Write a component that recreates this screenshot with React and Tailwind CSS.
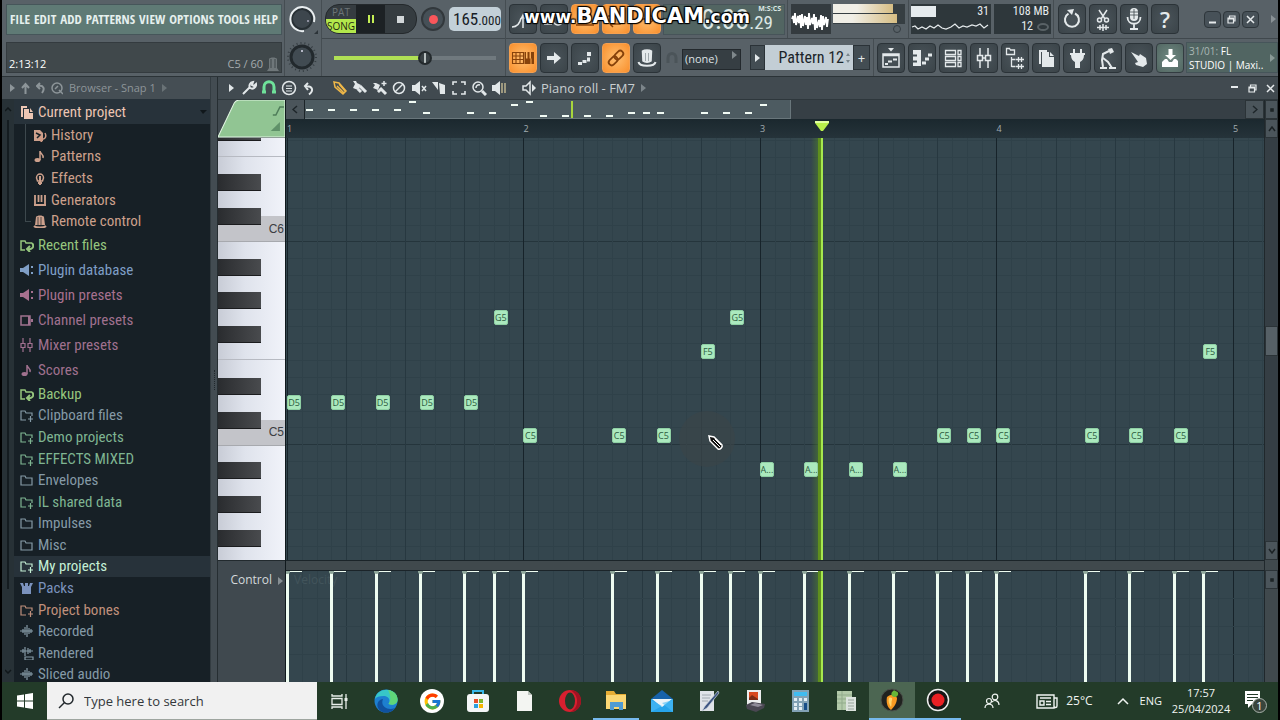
import { FcGoogle } from "react-icons/fc";

const STEP = 14.78;
const GRID_W = 978;
const GRID_H = 421;
const ROW = 16.87;

const ROWS = { G5: 10, F5: 12, D5: 15, C5: 17, "A...": 19 };

const NOTES = [
	[0, "D5"],
	[3, "D5"],
	[6, "D5"],
	[9, "D5"],
	[12, "D5"],
	[14, "G5"],
	[16, "C5"],
	[22, "C5"],
	[25, "C5"],
	[28, "F5"],
	[30, "G5"],
	[32, "A..."],
	[35, "A..."],
	[38, "A..."],
	[41, "A..."],
	[44, "C5"],
	[46, "C5"],
	[48, "C5"],
	[54, "C5"],
	[57, "C5"],
	[60, "C5"],
	[62, "F5"],
];

const stepLeft = (step, shift = 1) => `${((step * STEP + shift) / GRID_W) * 100}%`;
const rowTop = (row) => `${((row * ROW + 3) / GRID_H) * 100}%`;

/* ---------- icons ---------- */

const Glyph = ({ w = 28, h = 30, className = "", children }) => (
	<svg
		width={w}
		height={h}
		viewBox={`0 0 ${w} ${h}`}
		className={`shrink-0 ${className}`}
		fill="none"
		stroke="currentColor"
		strokeWidth="1.5"
		aria-hidden="true"
	>
		{children}
	</svg>
);

const Arrow = ({ className = "" }) => (
	<Glyph w={5} h={8} className={className}>
		<path d="M0 0 5 4 0 8z" fill="currentColor" stroke="none" />
	</Glyph>
);

const toolIcons = {
	wait: <path d="M3 23c5 0 8-4 9-9M14 11v13M12 15l2-4 2 4M17 15h6" />,
	countdown: (
		<>
			<circle cx="18" cy="16" r="5" />
			<path d="M4 20h8M6 16h5" />
		</>
	),
	blend: <path d="M5 21h18M8 17h12M11 13h6" />,
	loop: <path d="M6 12h12v8H8M18 12l-3-3M8 20l3 3" />,
	scroll: <path d="M5 15h16M16 10l5 5-5 5" />,
	typing: (
		<>
			<path d="M3.5 9.5h11v11h-11zM3.5 13h11M3.5 16.5h11M7 9v11M11 9v11" strokeWidth="1.1" />
			<path
				d="M15.5 9H17v6.5h1V21h-2.5zM18.5 9h2v6.500h1V21H18v-5.500h.5zM22 9h3v12h-2.500v-5.500H22z"
				fill="currentColor"
				stroke="none"
			/>
		</>
	),
	forward: <path d="M7 13h7V9l7 6-7 6v-4H7z" fill="currentColor" stroke="none" />,
	step: (
		<>
			<path d="M7 20.5h4M11.5 18.5h4" strokeWidth="3" />
			<path d="M17.5 18.500v-4" strokeWidth="3" />
			<path d="M16 9h4v4h-4z" fill="currentColor" stroke="none" />
		</>
	),
	link: (
		<g transform="rotate(-45 14 15)" strokeWidth="1.8">
			<rect x="5" y="12" width="10" height="6" rx="3" />
			<rect x="13" y="12" width="10" height="6" rx="3" />
		</g>
	),
	hat: (
		<>
			<path d="M9.5 8c2-1.5 7-1.5 9 0l-.5 10c-2 1.5-6 1.5-8 0z" fill="currentColor" />
			<path d="M5.5 19c1 5 16 5 17 0" strokeWidth="2" />
			<path d="M12.5 10v8M15.5 10v8" stroke="#59646a" strokeWidth=".5" />
		</>
	),
	playlist: (
		<>
			<path d="M11 5h6l-3 3.5z" fill="currentColor" stroke="none" />
			<path d="M6 11h16v13H6zM6 12.5h16" />
			<path d="M8 21h3M11 18.5h4M16 16.5h4" strokeWidth="2" />
		</>
	),
	pianoroll: (
		<>
			<path d="M5 7h8v16H5v-3.5h4v-2H5v-4h4v-2H5z" fill="currentColor" stroke="none" />
			<path d="M14 20h4M17 16h4M20 12h4" strokeWidth="3" />
		</>
	),
	rack: (
		<path
			d="M6.5 7.5h10v4h-10zM6.5 13.5h10v4h-10zM6.5 19.5h10v4h-10zM19 7.5h3v4h-3zM19 13.5h3v4h-3zM19 19.5h3v4h-3z"
			strokeWidth="1.3"
		/>
	),
	mixer: <path d="M10 5v7M10 18v7M18 5v7M18 18v7M7.5 12.5h5v5h-5zM15.5 12.5h5v5h-5zM12 15h4" />,
	browser: (
		<>
			<path d="M5.5 11.5v-6h3l1 1.5h4v4.500zM10.500 14v10M10.500 16.500h4M10.500 23.500h4M15 16.500h8M15 23.500h8" strokeWidth="1.3" />
			<path d="M17.5 14v5M20.5 14v5M17.5 21v5M20.5 21v5" strokeWidth="1.3" />
		</>
	),
	docs: (
		<>
			<path d="M7 7h8v2H9v12H7z" fill="currentColor" stroke="none" />
			<path d="M10 9h7v5h5v10H10zM18 9l4 4h-4z" fill="currentColor" stroke="none" />
		</>
	),
	plug: (
		<path
			d="M7 10h3V6h2v4h5V6h2v4h3v2h-1c0 4-2 6-4 7v6h-5v-6c-2-1-4-3-4-7H7z"
			fill="currentColor"
			stroke="none"
		/>
	),
	tempo: (
		<>
			<path d="M14 6l4-1 2 4-4 2z" fill="currentColor" stroke="none" />
			<path d="M15 8l-6 3-1 6 1 7M9 15l5 4 4 6M6 25h7M15 25h7" strokeWidth="2" />
		</>
	),
	hand: (
		<path
			d="M6 9l8 4 1-2 6 4 1 6-4 3-7-2-1-2 3-1-2-3z"
			fill="currentColor"
			stroke="none"
		/>
	),
	save: (
		<>
			<path d="M12.5 6h4v6H20l-5.5 5L9 12h3.500z" fill="currentColor" stroke="none" />
			<path d="M7 18l2-2h2l2 3h3l2-3h2l2 2v6H6v-5z" fill="currentColor" stroke="none" />
		</>
	),
	undo: (
		<>
			<path d="M17 9.5a7 7 0 1 1-6.5.2" strokeWidth="2" />
			<path d="M9 6l7-1-2 6z" fill="currentColor" stroke="none" />
		</>
	),
	cut: (
		<>
			<path d="M10 6l6 9M18 6l-6 9M8 23.5h12M11 21v5M14 20v7M17 21v5" />
			<circle cx="10.5" cy="16" r="2" />
			<circle cx="17.5" cy="16" r="2" />
		</>
	),
	mic: (
		<>
			<rect x="10" y="4" width="8" height="13" rx="4" fill="currentColor" stroke="none" />
			<path d="M7.5 13c0 9 13 9 13 0M14 20v4M10 25h8" strokeWidth="1.8" />
			<path d="M10 8h8M10 11h8M14 5v10" stroke="#3d464c" strokeWidth=".8" />
		</>
	),
};

const ToolButton = ({ name, label, lit, pale }) => (
	<button
		aria-label={label}
		className={
			lit
				? "w-7 h-[30px] rounded-sm border border-[#f5a050] bg-[radial-gradient(#ffc071,#f98f2c)] text-[#86420b]"
				: pale
					? "w-7 h-[30px] rounded-sm border border-[#333c41] bg-[radial-gradient(#708982,#526762)] text-white"
					: "w-7 h-[30px] rounded-sm border border-[#2b3338] bg-[radial-gradient(#4a545a,#3b4449)] text-[#e4e9eb]"
		}
	>
		<Glyph className="-m-px">{toolIcons[name]}</Glyph>
	</button>
);

const treeIcons = {
	docs: (
		<>
			<path d="M1 1h6v2H3v9H1z" fill="currentColor" stroke="none" />
			<path d="M4 4h5v4h4v6H4zM10 3l3 4h-3z" fill="currentColor" stroke="none" />
		</>
	),
	history: (
		<>
			<path d="M1 2h6l3 3v8H1z" fill="currentColor" stroke="none" />
			<path d="M12 5c2 4 0 7-5 6M9 8l-3 3 3 3" stroke="#d29a83" />
			<path d="M3 5l4 2-3 3" stroke="#172026" />
		</>
	),
	note: (
		<>
			<ellipse cx="4.5" cy="11" rx="3" ry="2" fill="currentColor" stroke="none" />
			<path d="M7 11V2c0 3 4 3 3 7" />
		</>
	),
	effect: (
		<>
			<path d="M3.5 7a3.5 4 0 1 1 7 0l-1 3h-5z" />
			<path d="M7 5v9M5 12h4" strokeWidth="2" />
		</>
	),
	keys: (
		<>
			<path d="M2 2v10h10V2" strokeWidth="1.8" />
			<path d="M1 12h12M5.5 2v7M8.5 2v7" strokeWidth="1.8" />
		</>
	),
	knob: (
		<>
			<path d="M3 3c1-2 7-2 8 0l1 8H2z" fill="currentColor" stroke="none" />
			<path d="M1 12c2 2 10 2 12 0" strokeWidth="2" />
			<path d="M5 3v8M8 3v8" stroke="#172026" strokeWidth=".7" />
		</>
	),
	recent: (
		<>
			<path d="M5 12H1V3h4l1 2h6" />
			<path d="M12 5c3 4 0 7-5 6M10 8l-3 3 3 3" strokeWidth="2" />
		</>
	),
	speaker: (
		<>
			<path d="M0 5h3l6-4v12L3 9H0z" fill="currentColor" stroke="none" />
			<path d="M11 4h2M11 10h2" strokeWidth="2" />
		</>
	),
	channel: (
		<>
			<path d="M1 3h9v9H1z" />
			<path d="M9 3v9M12 6v3" strokeWidth="2" />
		</>
	),
	faders: <path d="M3 0v5M3 10v4M10 0v5M10 10v4M1 5.5h4v4H1zM8 5.5h4v4H8z" strokeWidth="1.2" />,
	folder: <path d="M1 12V3h4l1 2h6v7z" strokeWidth="1.2" />,
	folderPlus: <path d="M6 12H1V3h4l1 2h6v3M8 11h5M10.5 8v6" strokeWidth="1.2" />,
	packs: <path d="M0 2h3l1 3h1V2h3v3h1l1-3h3l-2 4v7H2V6z" fill="currentColor" stroke="none" />,
	wave: <path d="M0 7h13M3 5v4M5 3v8M7 1v12M9 4v6M11 5v4" strokeWidth="1.2" />,
	render: <path d="M0 5h13M3 3v4M5 1v9M8 2v6M10 3v4M5 11h8v3H5z" strokeWidth="1.2" />,
};

/* ---------- top bar ---------- */

const MENU = ["FILE", "EDIT", "ADD", "PATTERNS", "VIEW", "OPTIONS", "TOOLS", "HELP"];

const Knob = ({ label, ring }) => (
	<button aria-label={label} className="h-[38px] w-full flex items-center justify-center">
		<Glyph w={32} h={32}>
			{ring ? (
				<>
					<circle cx="15" cy="16" r="10" fill="#3d464d" stroke="#272f34" strokeWidth="2" />
					<path d="M17 28A12 12 0 1 1 27 19" stroke="#e9eef0" strokeWidth="2" />
					<circle cx="21" cy="18" r="1" fill="#aab" stroke="none" />
					<path d="M31 27v4h-4z" fill="#2c3439" stroke="none" />
				</>
			) : (
				<>
					<circle cx="15" cy="16" r="14" stroke="#353d42" strokeWidth="2" strokeDasharray="1 3" />
					<circle cx="15" cy="16" r="11" fill="#414b52" stroke="#22292d" strokeWidth="3" />
					<circle cx="15" cy="10" r="1" fill="#dde" stroke="none" />
				</>
			)}
		</Glyph>
	</button>
);

const Transport = () => (
	<div className="w-[184px] shrink-0 border-l border-[#454d52] flex flex-col">
		<div className="h-[39px] flex items-center gap-1 pl-[3px] border-b border-[#40484d]">
			<div className="flex h-[30px] w-[92px] rounded-[14px] overflow-hidden border border-[#24292c] bg-[#353c40]">
				<div className="w-[30px] flex flex-col text-[10px] leading-[14px] font-['Open_Sans',sans-serif]">
					<button className="flex-1 text-[#6c7478]">PAT</button>
					<button className="flex-1 bg-[#b3e84c] text-[#1f2a10]">SONG</button>
				</div>
				<button aria-label="Pause" className="w-[29px] bg-[#1c2124] flex items-center justify-center">
					<Glyph w={8} h={8} className="text-[#c4ee55]">
						<path d="M2 0v8M6 0v8" strokeWidth="2" />
					</Glyph>
				</button>
				<button aria-label="Stop" className="flex-1 flex items-center justify-center">
					<span className="size-[7px] bg-[#d2d7d9]" />
				</button>
			</div>
			<button
				aria-label="Record"
				className="size-6 rounded-full border-2 border-[#32383c] bg-[#465057] flex items-center justify-center"
			>
				<span className="size-[9px] rounded-full bg-[#f9565b]" />
			</button>
			<button
				aria-label="Tempo"
				className="h-6 w-[52px] rounded-[5px] bg-[#c3d0d8] text-[#182026] flex items-baseline justify-start pl-1 font-['Liberation_Sans_Narrow','Roboto_Condensed','Open_Sans_Condensed',sans-serif]"
			>
				<span className="text-[17px] leading-6">165</span>
				<span className="text-[13px] leading-6">.000</span>
			</button>
		</div>
		<div className="h-[37px] flex items-center pl-3">
			<input
				type="range"
				aria-label="Main volume"
				defaultValue="57"
				className="w-[162px] h-4 appearance-none bg-[linear-gradient(to_right,#b0e055_56%,#70797e_56%)] bg-[length:100%_4px] bg-no-repeat bg-center [&::-webkit-slider-thumb]:appearance-none [&::-webkit-slider-thumb]:size-[14px] [&::-webkit-slider-thumb]:rounded-full [&::-webkit-slider-thumb]:border-2 [&::-webkit-slider-thumb]:border-[#23292c] [&::-webkit-slider-thumb]:bg-[linear-gradient(to_right,#394145_40%,#b8c0c0_40%,#b8c0c0_60%,#394145_60%)]"
			/>
		</div>
	</div>
);

const WindowButtons = ({ boxed }) => {
	const cls = boxed
		? "size-[17px] rounded-sm border border-[#2e363b] bg-[#475158] flex items-center justify-center"
		: "size-[16px] flex items-center justify-center";
	return (
		<div className="flex gap-[2px] text-[#e6eaec]">
			<button aria-label="Minimize" className={cls}>
				<Glyph w={9} h={9}>
					<path d={boxed ? "M1 7.5h7" : "M1 3h7"} strokeWidth="2" />
				</Glyph>
			</button>
			<button aria-label="Restore" className={cls}>
				<Glyph w={9} h={9}>
					<path d="M2.5 2.5V1H8v5H6.5M1 3h5.5v5H1zM1 4h5" strokeWidth="1.2" />
				</Glyph>
			</button>
			<button aria-label="Close" className={cls}>
				<Glyph w={9} h={9}>
					<path d="M1 1l7 7M8 1L1 8" />
				</Glyph>
			</button>
		</div>
	);
};

const TopBar = () => {
	return (
		<header className="relative shrink-0 flex h-[77px] bg-[#586167] border-b border-[#2b3337]">
			<div className="w-[282px] shrink-0 flex flex-col pl-1 pr-[2px]">
				<nav className="mt-1 h-[31px] flex items-center justify-between px-[3px] bg-[#5f7a75] border border-[#46565a] text-[#e6f0ee] text-[13px] font-['Open_Sans_Condensed','Liberation_Sans_Narrow',sans-serif]">
					{MENU.map((item) => (
						<button key={item}>{item}</button>
					))}
				</nav>
				<div className="mt-[7px] h-[31px] flex items-end gap-1 px-[2px] bg-[#40484b] border border-[#343b3f] text-[11px] leading-4 text-white font-['Open_Sans',sans-serif]">
					<span className="flex-1">2:13:12</span>
					<span className="text-[#a5abad]">C5 / 60</span>
					<Glyph w={12} h={16} className="text-[#6f777a]">
						<path d="M2 3c1-2 7-2 8 0v9l2 3H0l2-3z" fill="currentColor" stroke="none" />
						<path d="M4 3v9M8 3v9" stroke="#40484b" strokeWidth="1" />
					</Glyph>
				</div>
			</div>
			<div className="w-[37px] shrink-0 border-l border-[#454d52]">
				<Knob ring label="Main volume knob" />
				<Knob label="Main pitch knob" />
			</div>
			<Transport />
			<div className="flex-1 min-w-0 flex flex-col border-l border-[#454d52]">
				<div className="h-[39px] flex items-center pl-[3px] border-b border-[#40484d]">
					<div className="flex gap-[3px]">
						<ToolButton name="wait" label="Metronome" />
						<ToolButton name="countdown" label="Countdown" />
						<ToolButton name="blend" label="Blend notes" lit />
						<ToolButton name="loop" label="Loop record" lit />
						<ToolButton name="scroll" label="Auto scroll" lit />
					</div>
					<div className="ml-[2px] w-[122px] h-[31px] flex items-start justify-end bg-[#526562] border border-[#475459] text-[#dce7e5] font-['Liberation_Sans_Narrow','Roboto_Condensed','Open_Sans_Condensed',sans-serif]">
						<span className="text-[28px] leading-[29px]">0:03</span>
						<span className="flex flex-col items-end pr-[3px]">
							<span className="text-[7px] leading-[8px] font-bold font-['Open_Sans',sans-serif]">M:S:CS</span>
							<span className="text-[19px] leading-[20px] pr-2">.29</span>
						</span>
					</div>
					<div className="ml-[2px] pl-[3px] h-full flex items-center gap-[2px] border-l border-[#454d52]">
						<div className="w-10 h-[30px] bg-[#343b3f]">
							<Glyph w={40} h={30} className="text-white">
								<path
									d="M1 15l1-3 1 7 1-10 1 12 2-9 1 7 1-8 1 13 1-14 1 12 2-10 1 9 1-8 1 12 1-16 1 12 2-7 1 6 1-10 1 16 1-13 1 11 2-8 1 7 1-12 1 15 1-14 1 9 2-8 1 10 1-8"
									strokeWidth="1.8"
								/>
							</Glyph>
						</div>
						<div className="w-[72px] h-[30px] flex flex-col">
							<div className="h-5 bg-[#363e42] flex flex-col gap-px">
								<div className="h-[9px] w-[60px] bg-[linear-gradient(to_right,#f0eee6_40%,#d6bd83)]" />
								<div className="h-[9px] w-[64px] bg-[linear-gradient(to_right,#f0eee6_30%,#d6bd83)]" />
							</div>
							<span className="self-end mr-1 mt-px size-2 rounded-full border border-[#353d42]" />
						</div>
					</div>
					<div className="ml-[3px] pl-[2px] h-full flex items-center gap-[3px] border-l border-[#454d52] text-[#e6ebed] text-[12px] leading-[15px] font-['Liberation_Sans_Narrow','Roboto_Condensed','Open_Sans_Condensed',sans-serif]">
						<div className="w-20 h-[30px] bg-[#2e373b]">
							<div className="h-[15px] flex justify-between pr-[2px]">
								<span className="mt-[2px] h-[11px] w-[25px] bg-[#e5ebee]" />
								31
							</div>
							<Glyph w={80} h={15}>
								<path
									d="M1 8l3-1 3 3 4-2 4 2 4-3 4 2 4-3 4 3 4 1 5-2 4-3 4 4 4-2 4 1 5-2 4 1 4-2 4 4 4-3"
									strokeWidth="1.2"
								/>
							</Glyph>
						</div>
						<div className="w-[57px] h-[30px] bg-[#2e373b] pr-[2px] text-right">
							<div>108 MB</div>
							<div className="flex items-center justify-end gap-1">
								12
								<span className="h-2 w-3 rounded-[50%] border-2 border-[#596266]" />
							</div>
						</div>
					</div>
					<div className="ml-[2px] pl-1 h-full flex items-center gap-[3px] border-l border-[#454d52]">
						<ToolButton name="undo" label="Undo" />
						<ToolButton name="cut" label="Edit audio" />
						<ToolButton name="mic" label="Record audio" />
						<button
							aria-label="Help"
							className="w-7 h-[30px] rounded-sm border border-[#2b3338] bg-[radial-gradient(#4a545a,#3b4449)] text-[#e4e9eb] text-[22px] leading-7 font-semibold font-['Open_Sans',sans-serif]"
						>
							?
						</button>
					</div>
					<div className="ml-auto flex items-center gap-3 pr-[2px]">
						<WindowButtons boxed />
						<Arrow className="text-[#8a9296]" />
					</div>
				</div>
				<div className="h-[37px] flex items-center pl-[3px]">
					<div className="flex gap-[3px]">
						<ToolButton name="typing" label="Typing keyboard" lit />
						<ToolButton name="forward" label="Note off" />
						<ToolButton name="step" label="Step editing" />
						<ToolButton name="link" label="Link" lit />
						<ToolButton name="hat" label="Multilink" />
					</div>
					<Glyph w={12} h={12} className="ml-[5px] text-[#4b5459]">
						<path d="M2 11V6c0-6 8-6 8 0v5" strokeWidth="3" />
					</Glyph>
					<div className="relative ml-1 w-[59px]">
						<select
							aria-label="Snap"
							className="w-full h-[21px] pl-[2px] appearance-none bg-[#363e43] border border-[#23292d] text-[11px] leading-4 text-[#dde2e4] font-['Open_Sans',sans-serif]"
						>
							<option>(none)</option>
						</select>
						<Arrow className="absolute right-1 top-[6px] text-[#7f888c]" />
					</div>
					<div className="ml-[9px] flex h-[25px]">
						<button
							aria-label="Pattern menu"
							className="w-[15px] border border-[#2b3338] bg-[#434d53] flex items-center justify-center text-[#e4e9eb]"
						>
							<Arrow />
						</button>
						<input
							aria-label="Pattern"
							defaultValue="Pattern 12"
							className="w-[80px] pr-px text-right bg-[#c3ced5] text-[#1b2429] text-[16px] font-['Liberation_Sans_Narrow','Roboto_Condensed','Open_Sans_Condensed',sans-serif]"
						/>
						<span className="w-2 bg-[#c3ced5] flex items-center text-[#7a868c]">
							<Glyph w={6} h={12}>
								<path d="M1 4l2-3 2 3zM1 8l2 3 2-3z" fill="currentColor" stroke="none" />
							</Glyph>
						</span>
						<button
							aria-label="Add pattern"
							className="w-[17px] border border-[#2b3338] bg-[#434d53] text-[13px] leading-5 text-[#e4e9eb]"
						>
							+
						</button>
					</div>
					<div className="ml-[3px] pl-[3px] h-full flex items-center gap-[3px] border-l border-[#454d52]">
						<ToolButton name="playlist" label="Playlist" />
						<ToolButton name="pianoroll" label="Piano roll" />
						<ToolButton name="rack" label="Channel rack" />
						<ToolButton name="mixer" label="Mixer" />
						<ToolButton name="browser" label="Browser" />
						<ToolButton name="docs" label="Project" />
						<ToolButton name="plug" label="Plugins" />
						<ToolButton name="tempo" label="Tempo tapper" />
						<ToolButton name="hand" label="Touch control" />
						<ToolButton name="save" label="Downloads" pale />
					</div>
					<button className="ml-[2px] flex-1 h-[31px] flex items-center justify-between pl-[2px] pr-[2px] bg-[#516562] border border-[#46555a] text-left text-[10px] leading-[14px] text-white whitespace-nowrap font-['Open_Sans',sans-serif]">
						<span>
							<span className="text-[#a9b8b5]">31/01:</span> FL
							<br />
							STUDIO | Maxi..
						</span>
						<Arrow className="text-[#8a9a97]" />
					</button>
				</div>
			</div>
			<div className="absolute left-[522px] top-[2px] flex items-baseline text-white font-bold leading-7 pointer-events-none font-['DejaVu_Sans',sans-serif] [text-shadow:1px_1px_1px_#000,-1px_-1px_1px_#000,1px_-1px_1px_#000,-1px_1px_1px_#000]">
				<span className="text-[17px]">www.</span>
				<span className="text-[21px]">BANDICAM</span>
				<span className="text-[17px]">.com</span>
			</div>
		</header>
	);
};

/* ---------- browser ---------- */

const PROJECT = [
	["History", "history"],
	["Patterns", "note"],
	["Effects", "effect"],
	["Generators", "keys"],
	["Remote control", "knob"],
];

const LIBRARY = [
	["Recent files", "recent", "text-[#96c67e]"],
	["Plugin database", "speaker", "text-[#7f9fc6]"],
	["Plugin presets", "speaker", "text-[#a8718f]"],
	["Channel presets", "channel", "text-[#a0718f]"],
	["Mixer presets", "faders", "text-[#a0718f]"],
	["Scores", "note", "text-[#a0718f]"],
];

const FOLDERS = [
	["Backup", "recent", "text-[#96c67e]"],
	["Clipboard files", "folderPlus", "text-[#859aa6]"],
	["Demo projects", "folderPlus", "text-[#7fb592]"],
	["EFFECTS MIXED", "folderPlus", "text-[#7fb592]"],
	["Envelopes", "folder", "text-[#859aa6]"],
	["IL shared data", "folderPlus", "text-[#7fb592]"],
	["Impulses", "folder", "text-[#859aa6]"],
	["Misc", "folder", "text-[#859aa6]"],
	["My projects", "folderPlus", "text-[#c5f0d6] bg-[#27323a]"],
	["Packs", "packs", "text-[#7b92bd]"],
	["Project bones", "folderPlus", "text-[#c0907c]"],
	["Recorded", "wave", "text-[#859aa6]"],
	["Rendered", "render", "text-[#859aa6]"],
	["Sliced audio", "wave", "text-[#859aa6]"],
];

const TreeRow = ({ label, icon, className = "" }) => (
	<button className={`w-full flex-1 min-h-0 flex items-center gap-1 text-left ${className}`}>
		<Glyph w={14} h={14}>
			{treeIcons[icon]}
		</Glyph>
		<span>{label}</span>
	</button>
);

const Browser = () => {
	return (
		<aside className="w-[208px] shrink-0 flex flex-col bg-[#172026]">
			<div className="h-[22px] shrink-0 flex items-center pl-2 gap-[6px] bg-[#454e54] text-[#8d9599] text-[11px] font-['Open_Sans',sans-serif]">
				<Arrow />
				<Glyph w={9} h={12}>
					<path d="M4.5 12V2M1 6l3.5-4L8 6" strokeWidth="2" />
				</Glyph>
				<Glyph w={9} h={12}>
					<path d="M4 1L1 4l3 3M2 4c6-1 7 3 4 7" strokeWidth="2" />
				</Glyph>
				<Glyph w={12} h={13}>
					<circle cx="6" cy="6" r="5" />
					<path d="M8 8l4 4M4 7l3-3" />
				</Glyph>
				<span>Browser - Snap 1</span>
				<Arrow className="text-[#697276]" />
			</div>
			<div className="flex-1 min-h-0 flex">
				<div className="w-3 shrink-0 flex flex-col items-center justify-between py-2 bg-[#273136] text-[#10171a]">
					<Glyph w={7} h={5}>
						<path d="M0 4l3-3 3 3" />
					</Glyph>
					<div className="flex-1 w-[2px] mt-2 mb-20 bg-[#141c20]" />
					<Glyph w={7} h={5}>
						<path d="M0 1l3 3 3-3" />
					</Glyph>
				</div>
				<div className="flex-1 min-w-0 overflow-hidden text-[15px] leading-4 font-['Liberation_Sans_Narrow','Roboto_Condensed','Open_Sans_Condensed',sans-serif]">
					<div className="h-[25px] flex items-center pl-[6px] pr-[3px] bg-[#27323a] text-[#edc6b3]">
						<TreeRow label="Current project" icon="docs" />
						<Glyph w={7} h={4} className="text-[#10171b]">
							<path d="M0 0h7L3 4z" fill="currentColor" stroke="none" />
						</Glyph>
					</div>
					<div className="relative h-[108px] flex flex-col pl-[19px] text-[#cda08c]">
						{PROJECT.map(([label, icon]) => (
							<TreeRow key={label} label={label} icon={icon} />
						))}
						<span className="absolute left-[11px] top-0 bottom-[10px] w-[6px] border-l border-b border-[#3d484d]" />
					</div>
					<div className="h-[151px] flex flex-col">
						{LIBRARY.map(([label, icon, color]) => (
							<TreeRow key={label} label={label} icon={icon} className={`pl-[6px] ${color}`} />
						))}
					</div>
					<div className="h-[302px] flex flex-col">
						{FOLDERS.map(([label, icon, color]) => (
							<TreeRow key={label} label={label} icon={icon} className={`pl-[6px] ${color}`} />
						))}
					</div>
				</div>
			</div>
		</aside>
	);
};

/* ---------- piano roll ---------- */

const ICON = "text-[#e2e7e9]";

const rollTools = [
	["Options", `${ICON} ml-[7px]`, <path d="M2 14l7-7M15 4a4 4 0 0 1-6 4 4 4 0 0 1 3-6l-1 3 2 1z" strokeWidth="2" />],
	["Snap to grid", "text-[#6fe29a] ml-1", <path d="M3 13V7c0-7 10-7 10 0v6M1 12h4M11 12h4" strokeWidth="3" />],
	["Menu", `${ICON} ml-1`, <><circle cx="8" cy="8" r="6.5" /><path d="M5 6h6M5 8.5h6M5 11h6" strokeWidth="1.2" /></>],
	["Undo", `${ICON} ml-1`, <path d="M7 3L4 6l3 4M4 6.5c8-1 9 4 4 8" strokeWidth="2" />],
	["Draw", "text-[#f0b848] ml-[15px]", <path d="M2 2l5 1 7 8-3 3-8-7zM5 6l7 7M7 4l6 7" />],
	["Paint", `${ICON} ml-1`, <><path d="M1 1h3l1 2 4 2-3 5-5-2 2-4z" fill="currentColor" stroke="none" /><path d="M8 6l6 6M6 9l3 3" strokeWidth="3" /></>],
	["Paint sequence", `${ICON} ml-1`, <><path d="M1 3h3l4 2-2 5-5-2 2-3z" fill="currentColor" stroke="none" /><path d="M8 8l6 6M6 10l2 2" strokeWidth="3" /><path d="M12 1v5M9.5 3.5h5" /></>],
	["Delete", `${ICON} ml-[3px]`, <><circle cx="8" cy="8" r="5.5" /><path d="M4 12l8-8" /></>],
	["Mute", `${ICON} ml-1`, <><path d="M1 5h3l5-4v14L4 11H1z" fill="currentColor" stroke="none" /><path d="M11 6l4 5M15 6l-4 5" /></>],
	["Slice", `${ICON} ml-1`, <path d="M1 2l6 0v8zM8 3l6 2v9H9z" fill="currentColor" stroke="none" />],
	["Select", `${ICON} ml-1`, <path d="M2 5V2h4M10 2h4v3M14 11v3h-4M6 14H2v-3" strokeWidth="1.6" />],
	["Zoom", `${ICON} ml-1`, <><circle cx="7" cy="7" r="5" /><path d="M11 11l4 4" strokeWidth="3" /><path d="M5 8a3 3 0 0 1 4-3" /></>],
	["Playback", `${ICON} ml-1`, <><path d="M1 5h3l5-4v14L4 11H1z" fill="currentColor" stroke="none" /><path d="M11 3v10M14 3v10" stroke="#bdb48e" /></>],
	["Channel", `${ICON} ml-[14px]`, <><path d="M2 6h3l4-4v12L5 10H2z" /><path d="M11 4l4 4-4 4z" fill="currentColor" stroke="none" /></>],
];

const RollToolbar = () => (
	<div className="h-[23px] shrink-0 flex items-center pl-[11px] bg-[#414a50] border-b border-[#2e373c]">
		<button aria-label="Piano roll menu" className={ICON}>
			<Arrow />
		</button>
		{rollTools.map(([label, cls, icon]) => (
			<button key={label} aria-label={label} className={cls}>
				<Glyph w={16} h={16}>{icon}</Glyph>
			</button>
		))}
		<span className="ml-1 text-[13px] leading-5 text-[#c8ced1] font-['Open_Sans',sans-serif]">Piano roll - FM7</span>
		<Arrow className="ml-[6px] text-[#7c858a]" />
		<div className="ml-auto">
			<WindowButtons />
		</div>
	</div>
);

const BLACK_KEYS = [-14, 36, 70, 121, 154, 188, 239, 273, 323, 357, 391];
const KEY_LINES = [18, 220];
const C_KEYS = [
	["C6", 78],
	["C5", 281],
];

const pct = (y) => `${(y / GRID_H) * 100}%`;

const Keyboard = () => (
	<div className="relative flex-1 min-h-0 overflow-hidden bg-[linear-gradient(to_right,#c8ccd6,#dfe3ec_40%,#f1f3fa)]">
		{KEY_LINES.map((y) => (
			<div key={y} className="absolute inset-x-0 h-px bg-[#b7bac2]" style={{ top: pct(y) }} />
		))}
		{C_KEYS.map(([name, y]) => (
			<div
				key={name}
				className="absolute inset-x-0 h-[26px] flex items-center justify-end pr-px border-b border-[#a7a9ae] bg-[#c3c4c9] text-[12px] text-[#3b3d42] font-['Liberation_Sans',sans-serif]"
				style={{ top: pct(y) }}
			>
				{name}
			</div>
		))}
		{BLACK_KEYS.map((y) => (
			<div
				key={y}
				className="absolute left-0 w-[43px] h-[17px] bg-[linear-gradient(to_right,#2a2c2f,#494b4e)] border-b border-[#1b1c1e]"
				style={{ top: pct(y) }}
			/>
		))}
	</div>
);

const STEPS = Array.from({ length: 67 }, (_, i) => i);
const LINES = Array.from({ length: 25 }, (_, i) => i);

const StepLines = () =>
	STEPS.map((s) => (
		<div
			key={s}
			className={
				s % 16 === 0
					? "absolute inset-y-0 w-px bg-[#17232a]"
					: s % 4 === 0
						? "absolute inset-y-0 w-px bg-[#273840]"
						: "absolute inset-y-0 w-px bg-[#2f4149]"
			}
			style={{ left: stepLeft(s) }}
		/>
	));

const PlayGlow = () => (
	<div
		className="absolute inset-y-0 w-3 -ml-[11px] bg-[linear-gradient(to_right,transparent,#4c7a2c)]"
		style={{ left: "54.8%" }}
	/>
);

const Playhead = () => (
	<div
		className="absolute inset-y-0 w-[5px] -ml-1 border-r-2 border-[#a6e84e] bg-[#5f8f1e]"
		style={{ left: "54.8%" }}
	/>
);

const NoteGrid = () => (
	<div className="relative flex-1 min-h-0 overflow-hidden bg-[#34464e]">
		{LINES.map((r) => (
			<div
				key={r}
				className={r === 6 || r === 18 ? "absolute inset-x-0 h-px bg-[#25353c]" : "absolute inset-x-0 h-px bg-[#2f4149]"}
				style={{ top: pct(r * ROW + 2) }}
			/>
		))}
		<StepLines />
		<PlayGlow />
		<div className="absolute size-14 rounded-full bg-[#3c4448]/60" style={{ left: "40.2%", top: "64.7%" }} />
		{NOTES.map(([step, name]) => (
			<div
				key={step}
				className="absolute w-[14px] h-[15px] rounded-[2px] border border-[#8fd0a4] bg-[#abe9be] text-[9px] leading-[13px] text-[#2d5c3f] flex justify-center overflow-hidden whitespace-nowrap font-['Open_Sans',sans-serif]"
				style={{ left: stepLeft(step), top: rowTop(ROWS[name]) }}
			>
				{name}
			</div>
		))}
		<Playhead />
		<svg
			width="16"
			height="16"
			viewBox="0 0 16 16"
			className="absolute"
			style={{ left: "43.1%", top: "70.4%" }}
			aria-hidden="true"
		>
			<path d="M1 1l5 1 8 8c1 2-2 5-4 4L2 6z" fill="#111" stroke="#fff" strokeWidth="1.5" />
			<path d="M5 5l7 7M7 4l6 6" stroke="#fff" />
		</svg>
	</div>
);

const OVERVIEW_Y = { G5: 1, F5: 4, D5: 9, C5: 12, "A...": 15 };

const Overview = () => (
	<div className="h-[19px] shrink-0 flex bg-[#363f45]">
		<button aria-label="Scroll left" className="w-[18px] bg-[#4b555b] flex items-center justify-center text-[#1e262a]">
			<Glyph w={6} h={9}>
				<path d="M5 1L1 4.5 5 8" />
			</Glyph>
		</button>
		<div className="relative flex-1 border-l border-[#1d2529]">
			<div className="absolute inset-y-0 left-0 w-[51.7%] bg-[#4d5b61] border-b border-r border-[#69767b]" />
			{NOTES.map(([step, name]) => (
				<span
					key={step}
					className="absolute w-[7px] h-[2px] bg-[#f1fbf4]"
					style={{ left: `${((step * 7.33 + 1) / 941) * 100}%`, top: OVERVIEW_Y[name] }}
				/>
			))}
			<span className="absolute inset-y-px left-[28.3%] w-[2px] bg-[#a8d63c]" />
		</div>
		<button aria-label="Scroll right" className="w-[19px] bg-[#4b555b] border border-[#2b3337] flex items-center justify-center text-[#1e262a]">
			<Glyph w={6} h={9}>
				<path d="M1 1l4 3.5L1 8" />
			</Glyph>
		</button>
	</div>
);

const Ruler = () => (
	<div className="relative h-[19px] shrink-0 bg-[linear-gradient(#1b282e,#25333a)] text-[9px] leading-[19px] text-[#a3adb1] font-['Open_Sans',sans-serif]">
		{[1, 2, 3, 4, 5].map((bar) => (
			<span key={bar} className="absolute top-0" style={{ left: stepLeft((bar - 1) * 16) }}>
				{bar}
			</span>
		))}
		<svg
			width="14"
			height="10"
			viewBox="0 0 14 10"
			className="absolute top-[2px] -ml-[7px]"
			style={{ left: "54.8%" }}
			aria-hidden="true"
		>
			<path d="M0 0h14v2L8 10H6L0 2z" fill="#b9f04b" />
			<path d="M0 0h14v2H0z" fill="#e2ffa0" />
		</svg>
	</div>
);

const Velocity = () => (
	<div className="relative h-[112px] shrink-0 overflow-hidden border-t border-[#1b2429] bg-[#34464e]">
		<StepLines />
		{[27, 55, 83].map((y) => (
			<div key={y} className="absolute inset-x-0 h-px bg-[#2f4149]" style={{ top: y }} />
		))}
		<span className="absolute left-2 top-px text-[12px] leading-4 text-[#42545b] font-['Open_Sans',sans-serif]">Velocity</span>
		<PlayGlow />
		{NOTES.map(([step]) => (
			<div key={step} className="absolute inset-y-0 w-4" style={{ left: stepLeft(step) }}>
				<span className="absolute inset-y-0 -left-px w-[3px] bg-[#eefcf1]" />
				<span className="absolute top-0 left-0 w-[15px] h-px bg-[#eefcf1]" />
				<span className="absolute -top-[2px] -left-[2px] size-[5px] rounded-full bg-[#8fa79b]" />
			</div>
		))}
		<Playhead />
	</div>
);

const ScrollBtn = ({ label, d }) => (
	<button aria-label={label} className="h-[19px] shrink-0 w-full bg-[#4b555b] border border-[#2b3337] flex items-center justify-center text-[#1b2225]">
		<Glyph w={8} h={6}>
			<path d={d} />
		</Glyph>
	</button>
);

const PianoRoll = () => {
	return (
		<main className="flex-1 min-w-0 flex flex-col border-l border-[#262e32]">
			<RollToolbar />
			<div className="flex-1 min-h-0 flex">
				<div className="w-[68px] shrink-0 flex flex-col bg-[#40494f] border-r border-[#10191d]">
					<svg
						viewBox="0 0 66 38"
						preserveAspectRatio="none"
						className="h-[38px] w-full shrink-0"
						aria-hidden="true"
					>
						<path d="M0 37L16 3Q18 0 21 0H66V37z" fill="#91c593" stroke="#e0f5e1" />
						<path d="M54 15h3l4-8h4" fill="none" stroke="#4f7d5a" strokeWidth="1.5" />
						<path d="M61 22v9h-9z" fill="#5f9169" />
					</svg>
					<Keyboard />
					<div className="h-[122px] shrink-0 flex items-start justify-end gap-2 pt-[9px] pr-[2px] border-t border-[#222a2e] text-[12px] leading-5 text-[#d4d9db] font-['Open_Sans',sans-serif]">
						Control
						<Arrow className="mt-[7px] -ml-[2px] text-[#878f93]" />
					</div>
				</div>
				<div className="flex-1 min-w-0 flex flex-col">
					<Overview />
					<Ruler />
					<NoteGrid />
					<div className="h-[10px] shrink-0 bg-[#40494d] border-t border-[#1b2429]" />
					<Velocity />
				</div>
				<div className="w-[14px] shrink-0 flex flex-col bg-[#353e44] border-l border-[#20282c]">
					<ScrollBtn label="Zoom" d="M3 2h2v2H3z" />
					<ScrollBtn label="Scroll up" d="M1 5l3-4 3 4" />
					<div className="flex-1 flex flex-col">
						<div className="flex-[187]" />
						<div className="h-[30px] bg-[#566066] border border-[#2b3337]" />
						<div className="flex-[185]" />
					</div>
					<ScrollBtn label="Scroll down" d="M1 1l3 4 3-4" />
					<div className="h-[122px] shrink-0 pt-[10px] bg-[#40494d]">
						<ScrollBtn label="Resize" d="M3 2h2v2H3z" />
					</div>
				</div>
			</div>
		</main>
	);
};

/* ---------- taskbar ---------- */

const App24 = ({ children }) => (
	<svg width="24" height="24" viewBox="0 0 24 24" fill="none" aria-hidden="true">
		{children}
	</svg>
);

const APPS = [
	[
		"Task view",
		"",
		<App24>
			<path d="M4 5v2h10V5M4 20v-2h10v2M4 9.5h10v6H4zM18 5v4M18 12v8" stroke="#e8eee9" strokeWidth="1.3" />
			<path d="M16.5 9h3v3h-3z" fill="#e8eee9" />
		</App24>,
	],
	[
		"Edge",
		"",
		<App24>
			<circle cx="12" cy="12" r="11.5" fill="#1d7fd0" />
			<path d="M1 10C3-3 24-2 23.5 11c0 4-5 6-9 4 3-5-1-8-5-8S2 8 1 10z" fill="#37c6c8" />
			<path d="M14 1c7 1 10 6 9.5 10 0 4-5 6-9 4 3-4 2-9-.5-14z" fill="#5fd579" />
			<path d="M9 10c-3 7 4 12 12 9-4 6-14 6-17 0-2-4 1-9 5-9z" fill="#10519f" />
		</App24>,
	],
	[
		"Google",
		"",
		<span className="size-6 rounded-full bg-white flex items-center justify-center">
			<FcGoogle size={19} />
		</span>,
	],
	[
		"Store",
		"",
		<App24>
			<path d="M7 6V2h10v4" stroke="#38b7e8" strokeWidth="2" />
			<rect x="1" y="5" width="22" height="18" rx="3" fill="#f4f6f7" />
			<path d="M8 10h4v4H8z" fill="#e8502b" />
			<path d="M13 10h4v4h-4z" fill="#7cb82f" />
			<path d="M8 15h4v4H8z" fill="#2aa0e0" />
			<path d="M13 15h4v4h-4z" fill="#f5b400" />
		</App24>,
	],
	[
		"Document",
		"",
		<App24>
			<path d="M5 2h11l4 4v16H5z" fill="#f3f5f2" />
			<path d="M16 2v4h4z" fill="#bfc6c0" />
		</App24>,
	],
	[
		"Opera",
		"",
		<App24>
			<ellipse cx="12" cy="12" rx="11" ry="11" fill="#d81f2f" />
			<path d="M12 1c8 0 11 5 11 11s-4 11-11 11c10-4 9-18 0-22z" fill="#a01322" />
			<ellipse cx="12" cy="12" rx="5" ry="8.5" fill="#233b29" />
		</App24>,
	],
	[
		"File Explorer",
		"border-b-2 border-[#76b9ed]",
		<App24>
			<path d="M2 3h8l2 3h10v15H2z" fill="#e6ad35" />
			<path d="M2 7h20v14H2z" fill="#fbd774" />
			<path d="M6 22v-8h13v8h-4v-3h-5v3z" fill="#4f9bd3" />
		</App24>,
	],
	[
		"Mail",
		"",
		<App24>
			<path d="M1 10L12 1l11 9z" fill="#1762ab" />
			<path d="M1 10h22v13H1z" fill="#27a4ea" />
			<path d="M2 10h20l-10 8z" fill="#edf4f8" />
			<path d="M1 11v12l11-6zM23 23L12 14l11-3z" fill="#4cbdf5" opacity=".6" />
		</App24>,
	],
	[
		"Journal",
		"",
		<App24>
			<path d="M4 2h14v20H4z" fill="#dfe3e8" />
			<path d="M6 6h9M6 9h8M6 12h6" stroke="#a0a8b0" />
			<path d="M22 2L9 17l-3 5 5-3L23 4z" fill="#3d5583" stroke="#ccd4dd" strokeWidth=".7" />
		</App24>,
	],
	[
		"Scanner",
		"",
		<App24>
			<path d="M5 1h14v16H5z" fill="#eceded" />
			<path d="M7 3h9v8H7z" fill="#d8481f" />
			<path d="M7 9l3-3 6 4v1H7z" fill="#7b2a14" />
			<path d="M4 16l6-3 13 2-1 4-8 4-9-3z" fill="#4a4752" />
			<path d="M8 16l5-2 8 2-5 2z" fill="#8f8b98" />
		</App24>,
	],
	[
		"Calculator",
		"",
		<App24>
			<rect x="4" y="1" width="17" height="22" fill="#82a2b5" />
			<path d="M6 3h13v4H6z" fill="#40bcf0" />
			<path d="M6 9h3v3H6zM11 9h3v3h-3zM16 9h3v3h-3zM6 14h3v3H6zM11 14h3v3h-3zM6 18h3v3H6zM11 18h3v3h-3z" fill="#e2edf3" />
			<path d="M16 14h3v7h-3z" fill="#174e88" />
		</App24>,
	],
	[
		"Notes",
		"",
		<App24>
			<path d="M3 2h15v19H3z" fill="#b2c9a9" />
			<path d="M3 6h15M3 10h15M3 14h9M8 2v19" stroke="#91ab8b" />
			<path d="M12 8h10v14H12z" fill="#dce3de" />
			<path d="M14 11h6M14 14h6M14 17h6M14 20h6" stroke="#97a49b" />
		</App24>,
	],
	[
		"FL Studio",
		"bg-[#4c6652] border-b-2 border-[#76b9ed]",
		<App24>
			<circle cx="12" cy="12" r="11" fill="#20221f" stroke="#4b524b" />
			<path d="M7 9c4-3 8-3 10 1 0 5-3 9-6 12-4-3-5-8-4-13z" fill="#f99b22" />
			<path d="M9 10c2-1 4 0 3 2s0 5-1 7c-2-3-3-6-2-9z" fill="#ffd66e" />
			<path d="M12 8C10 4 14 3 14 2c2 2 5 1 4 5-1 2-4 3-6 1z" fill="#66b637" />
		</App24>,
	],
	[
		"Bandicam",
		"border-b-2 border-[#76b9ed]",
		<App24>
			<circle cx="12" cy="12" r="10.5" fill="#161616" stroke="#eee" strokeWidth="1.5" />
			<circle cx="12" cy="12" r="6.5" fill="#ea2024" />
		</App24>,
	],
];

const Taskbar = () => {
	return (
		<footer className="h-[38px] shrink-0 flex bg-[#233b29] text-[#f0f4f1] font-['Open_Sans',sans-serif]">
			<button aria-label="Start" className="w-[45px] shrink-0 flex items-center justify-center">
				<svg width="16" height="16" viewBox="0 0 16 16" fill="#fff" aria-hidden="true">
					<path d="M0 2.5L7 1.5v6H0zM8 1.3L16 0v7.5H8zM0 8.5h7v6L0 13.500zM8 8.500h8V16l-8-1.300z" />
				</svg>
			</button>
			<label className="w-[270px] flex items-center gap-[10px] pl-[11px] bg-[#f1f1f1] border-b border-[#9ea59f] text-[#22282c]">
				<Glyph w={16} h={16}>
					<circle cx="10" cy="6" r="5" />
					<path d="M6.5 9.5L1 15" />
				</Glyph>
				<input
					aria-label="Type here to search"
					placeholder="Type here to search"
					className="flex-1 min-w-0 bg-transparent text-[13px] leading-5 outline-none placeholder:text-[#33383b]"
				/>
			</label>
			{APPS.map(([label, cls, icon]) => (
				<button key={label} aria-label={label} className={`w-[46px] flex items-center justify-center ${cls}`}>
					{icon}
				</button>
			))}
			<div className="ml-auto flex items-center pr-3 text-[12px] leading-4">
				<button aria-label="People" className="mr-9">
					<Glyph w={16} h={16}>
						<circle cx="5" cy="8" r="2.5" strokeWidth="1.2" />
						<circle cx="11" cy="4" r="2.8" strokeWidth="1.2" />
						<path d="M1 15c0-5 8-5 8 0M8 9c3-3 7-1 7 3" strokeWidth="1.2" />
					</Glyph>
				</button>
				<button className="flex items-center gap-2 text-[12px]">
					<Glyph w={22} h={16}>
						<path d="M1 2h17v13H1zM18 5h3v8c0 2-3 2-3 0M4 5h11M4 8h4v4H4zM10 8.5h5M10 11.5h5" strokeWidth="1.4" />
					</Glyph>
					25°C
				</button>
				<button aria-label="Show hidden icons" className="ml-6">
					<Glyph w={12} h={8}>
						<path d="M1 7l5-5 5 5" />
					</Glyph>
				</button>
				<button className="ml-[11px] text-[11px]">ENG</button>
				<button className="ml-[10px] w-[58px] flex flex-col items-center text-[11px]">
					<span>17:57</span>
					<span>25/04/2024</span>
				</button>
				<button aria-label="Notifications" className="relative ml-[14px] text-white">
					<Glyph w={22} h={22}>
						<path d="M1 1h15v13H8l-4 4v-4H1z" fill="currentColor" stroke="none" />
						<path d="M3 4.5h11M3 7.5h11M3 10.5h6" stroke="#233b29" strokeWidth="1.2" />
					</Glyph>
					<span className="absolute left-2 top-2 size-[15px] rounded-full border border-[#aab3ac] bg-[#39453c] text-[11px] leading-[13px]">1</span>
				</button>
			</div>
		</footer>
	);
};

const App = () => {
	return (
		<div className="h-screen flex flex-col overflow-hidden bg-black px-[2px]">
			<TopBar />
			<div className="flex-1 min-h-0 flex bg-[#434c52]">
				<Browser />
				<div className="w-[7px] shrink-0 flex items-center justify-center border-l border-[#333c41]">
					<span className="h-5 border-l border-dotted border-[#20282c]" />
				</div>
				<PianoRoll />
			</div>
			<Taskbar />
		</div>
	);
};

export default App;
